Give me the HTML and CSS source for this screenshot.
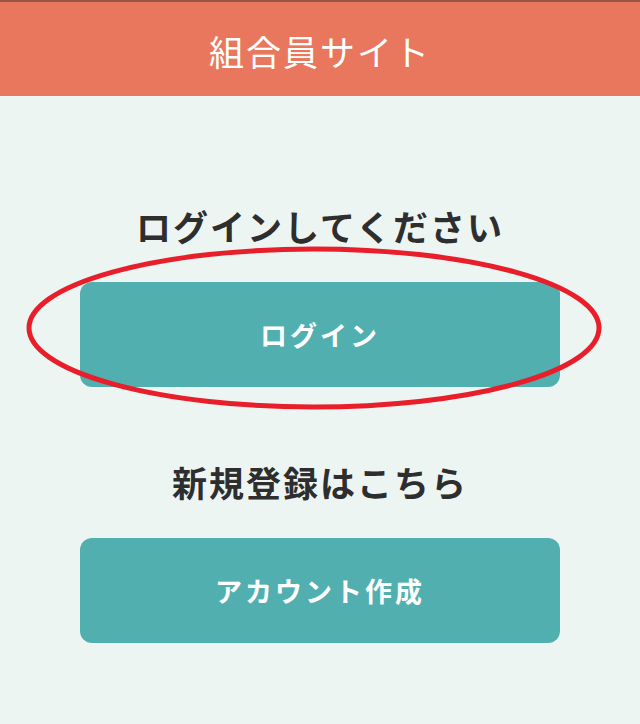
FILE: index.html
```html
<!DOCTYPE html>
<html lang="ja">
<head>
  <meta charset="UTF-8">
  <meta name="viewport" content="width=device-width, initial-scale=1.0">
  <title>組合員サイト</title>
  <link rel="stylesheet" href="styles.css">
</head>
<body>
  <!-- Header -->
  <header class="site-header">
    <h1>組合員サイト</h1>
  </header>

  <main class="container">
    <!-- Login Section -->
    <section class="block">
      <h2>ログインしてください</h2>
      <div class="marked">
        <button class="btn">ログイン</button>
        <svg class="circle-mark" width="580" height="168" viewBox="0 0 580 168">
          <ellipse cx="290" cy="84" rx="285" ry="79" fill="none" stroke="#e81f2b" stroke-width="5"/>
        </svg>
      </div>
    </section>

    <!-- Sign up Section -->
    <section class="block signup">
      <h2>新規登録はこちら</h2>
      <button class="btn">アカウント作成</button>
    </section>
  </main>
</body>
</html>
```

FILE: styles.css
```css
* {
  margin: 0;
  padding: 0;
  box-sizing: border-box;
}

body {
  font-family: "Noto Sans CJK JP", "Noto Sans", sans-serif;
  background-color: #edf5f3;
  min-height: 100vh;
}

.site-header {
  height: 96px;
  background-color: #e8775d;
  border-top: 2px solid #9a5444;
  display: flex;
  justify-content: center;
  align-items: center;
}

.site-header h1 {
  color: #fff;
  font-size: 35px;
  font-weight: 400;
  letter-spacing: 2px;
  line-height: 1;
  margin-top: 3px;
}

.container {
  width: 480px;
  margin: 0 auto;
  padding-top: 108px;
}

.block h2 {
  text-align: center;
  font-size: 35px;
  font-weight: 700;
  color: #2e2e2e;
  letter-spacing: 2px;
  line-height: 44px;
  margin-bottom: 34px;
}

.signup {
  margin-top: 73px;
}

.marked {
  position: relative;
}

.btn {
  display: block;
  width: 100%;
  height: 105px;
  border: none;
  border-radius: 12px;
  background-color: #52afaf;
  color: #fff;
  font-family: inherit;
  font-size: 27px;
  font-weight: 700;
  letter-spacing: 3px;
  cursor: pointer;
}

.circle-mark {
  position: absolute;
  left: -56px;
  top: -38px;
  pointer-events: none;
}
```
